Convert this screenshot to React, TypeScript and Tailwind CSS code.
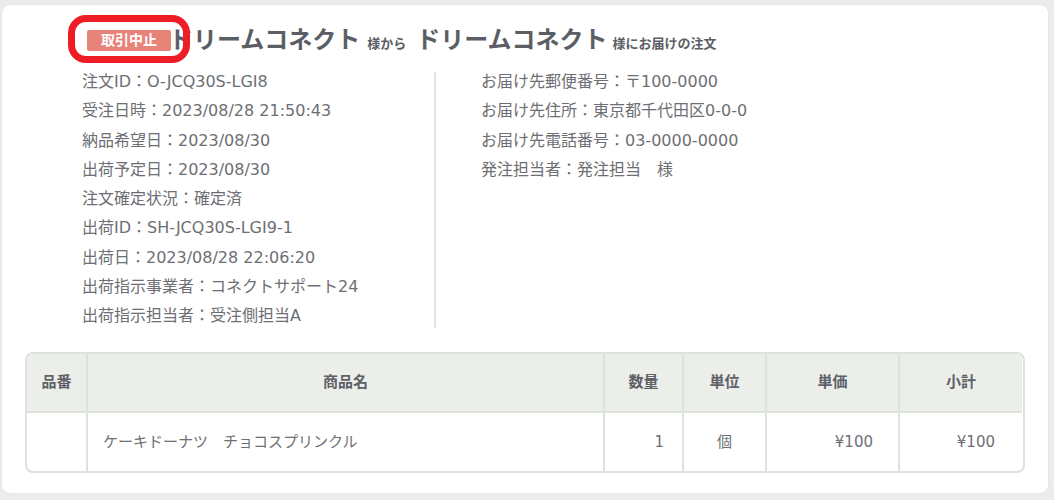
import React from 'react'

const left = [
  '注文ID：O-JCQ30S-LGI8',
  '受注日時：2023/08/28 21:50:43',
  '納品希望日：2023/08/30',
  '出荷予定日：2023/08/30',
  '注文確定状況：確定済',
  '出荷ID：SH-JCQ30S-LGI9-1',
  '出荷日：2023/08/28 22:06:20',
  '出荷指示事業者：コネクトサポート24',
  '出荷指示担当者：受注側担当A',
]

const right = [
  'お届け先郵便番号：〒100-0000',
  'お届け先住所：東京都千代田区0-0-0',
  'お届け先電話番号：03-0000-0000',
  '発注担当者：発注担当　様',
]

export default function App() {
  return (
    <div
      className="w-[1054px] h-[500px] bg-[#ebecee] pt-[5px] pl-[2px]"
      style={{ fontFamily: '"DejaVu Sans", "Noto Sans CJK JP", sans-serif' }}
    >
      <div className="w-[1046px] h-[488px] bg-white rounded-[8px] shadow-[0_0_2px_rgba(0,0,0,0.08)] flex flex-col">
        {/* title */}
        <div className="flex items-end h-[52px] pl-[85px] pb-[1px] text-[#5c5e66]">
          <div className="relative mb-[5px] -mr-[2px]">
            <span className="block w-[84px] h-[21px] leading-[21px] text-center rounded-[2px] bg-[#e8837a] text-white text-[14px] font-bold">
              取引中止
            </span>
            <div className="absolute -left-[19px] -right-[19px] -top-[15px] -bottom-[12px] border-[7px] border-[#ee1c25] rounded-[18px]" />
          </div>
          <span className="text-[24px] font-bold leading-[32px]">ドリームコネクト</span>
          <span className="text-[13px] font-bold leading-[24px] ml-[7px] mr-[10px]">様から</span>
          <span className="text-[24px] font-bold leading-[32px]">ドリームコネクト</span>
          <span className="text-[13px] font-bold leading-[24px] ml-[5px]">様にお届けの注文</span>
        </div>

        {/* info */}
        <div className="flex mt-[15px] text-[16px] text-[#6d6f74]">
          <div className="w-[434px] pl-[80px] border-r-2 border-[#dde2dd] h-[256px]">
            <div className="-mt-[5px]">
              {left.map(t => (
                <div key={t} className="h-[29.25px] leading-[29.25px] whitespace-nowrap">{t}</div>
              ))}
            </div>
          </div>
          <div className="pl-[45px]">
            <div className="-mt-[5px]">
              {right.map(t => (
                <div key={t} className="h-[29.25px] leading-[29.25px] whitespace-nowrap">{t}</div>
              ))}
            </div>
          </div>
        </div>

        {/* table */}
        <div className="mx-[23px] mt-[24px] border-2 border-[#dde2dd] rounded-[8px] overflow-hidden">
          <table className="w-[995px] border-collapse table-fixed text-[15px]">
            <colgroup>
              <col className="w-[60px]" />
              <col className="w-[517px]" />
              <col className="w-[79px]" />
              <col className="w-[83px]" />
              <col className="w-[133px]" />
              <col />
            </colgroup>
            <thead>
              <tr className="h-[58px] bg-[#eceeea] text-[#5f6168] font-bold">
                {['品番', '商品名', '数量', '単位', '単価', '小計'].map((h, i) => (
                  <th key={h} className={`font-bold text-center border-b-2 border-[#dde2dd] ${i > 0 ? 'border-l-2' : ''}`}>
                    {h}
                  </th>
                ))}
              </tr>
            </thead>
            <tbody>
              <tr className="h-[59px] text-[#6d6f74]">
                <td />
                <td className="border-l-2 border-[#dde2dd] pl-[15px]">ケーキドーナツ　チョコスプリンクル</td>
                <td className="border-l-2 border-[#dde2dd] text-right pr-[18px]">1</td>
                <td className="border-l-2 border-[#dde2dd] text-center">個</td>
                <td className="border-l-2 border-[#dde2dd] text-right pr-[25px]">¥100</td>
                <td className="border-l-2 border-[#dde2dd] text-right pr-[27px]">¥100</td>
              </tr>
            </tbody>
          </table>
        </div>
      </div>
    </div>
  )
}
